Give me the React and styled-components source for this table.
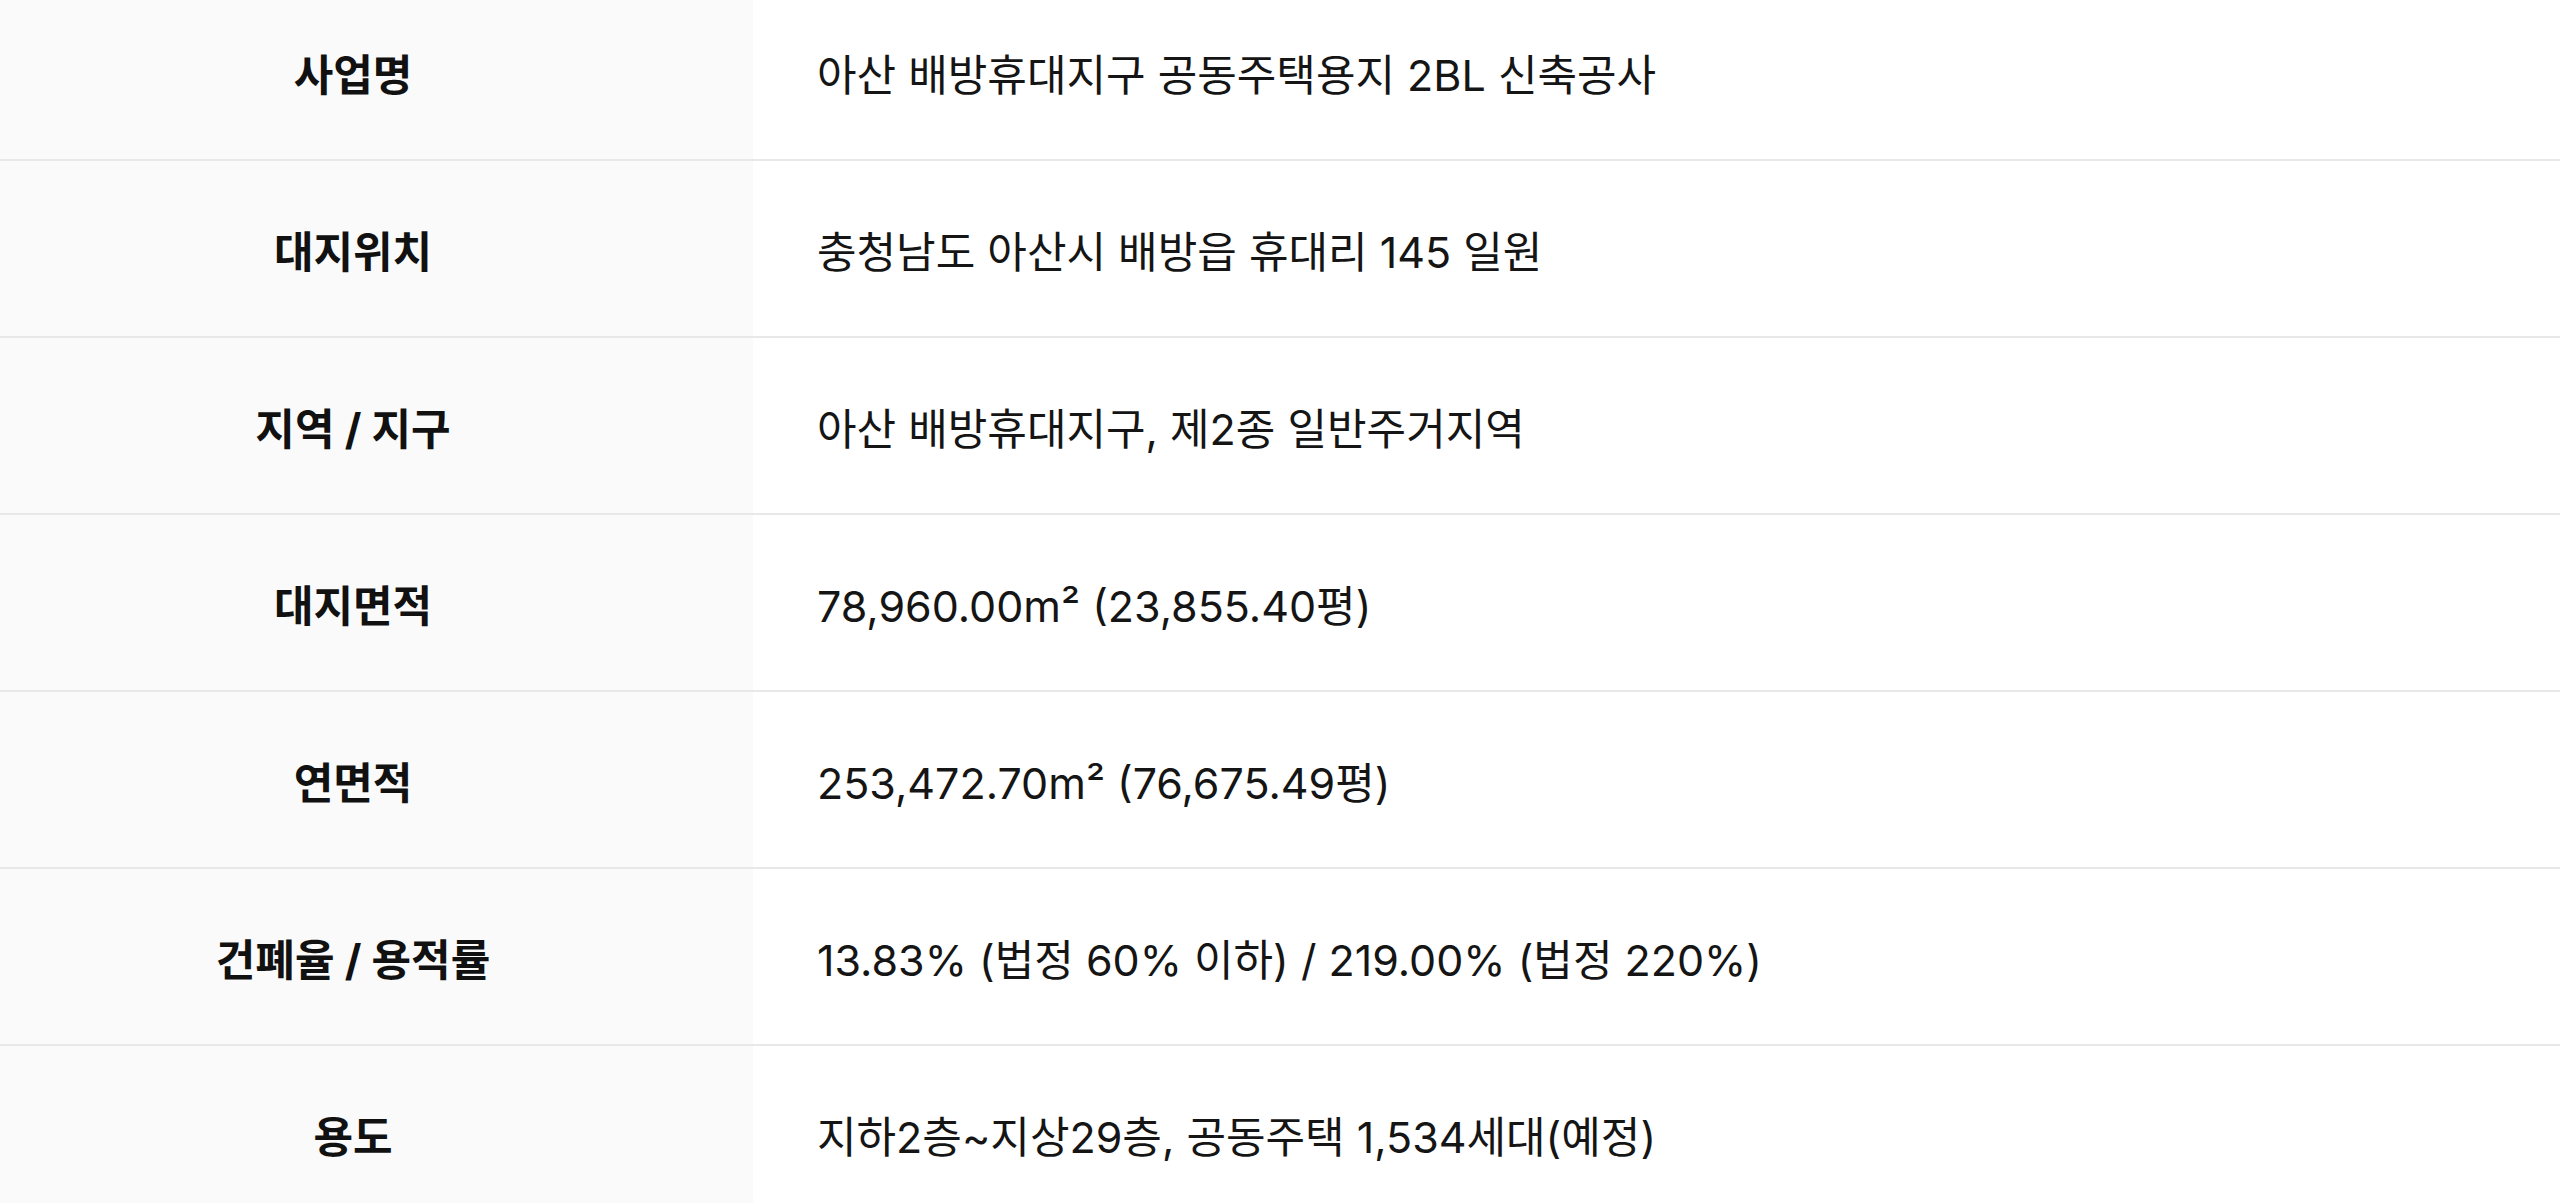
import React from 'react';
import styled, { createGlobalStyle } from 'styled-components';

const GlobalStyle = createGlobalStyle`
  html, body {
    margin: 0;
    padding: 0;
    background: #ffffff;
  }
  body {
    font-family: Inter, "Noto Sans CJK KR", sans-serif;
    color: #111111;
    overflow: hidden;
  }
`;

const InfoTable = styled.div`
  display: flex;
  flex-direction: column;
  margin-top: -16px;
`;

const Row = styled.div`
  display: grid;
  grid-template-columns: 753px 1fr;
  height: 177px;
  border-bottom: 2px solid #e8e8e8;
  box-sizing: border-box;
`;

const Label = styled.div`
  display: flex;
  align-items: center;
  justify-content: center;
  padding-right: 47px;
  background: #fafafa;
  font-size: 43px;
  font-weight: 700;
  color: #111111;
`;

const Value = styled.div`
  display: flex;
  align-items: center;
  padding-left: 64px;
  font-size: 43px;
  font-weight: 400;
  color: #151515;
`;

const rows = [
  { label: '사업명', value: '아산 배방휴대지구 공동주택용지 2BL 신축공사' },
  { label: '대지위치', value: '충청남도 아산시 배방읍 휴대리 145 일원' },
  { label: '지역 / 지구', value: '아산 배방휴대지구, 제2종 일반주거지역' },
  { label: '대지면적', value: '78,960.00m² (23,855.40평)' },
  { label: '연면적', value: '253,472.70m² (76,675.49평)' },
  { label: '건폐율 / 용적률', value: '13.83% (법정 60% 이하) / 219.00% (법정 220%)' },
  { label: '용도', value: '지하2층~지상29층, 공동주택 1,534세대(예정)' },
];

function App() {
  return (
    <>
      <GlobalStyle />
      <InfoTable>
        {rows.map((row) => (
          <Row key={row.label}>
            <Label>{row.label}</Label>
            <Value>{row.value}</Value>
          </Row>
        ))}
      </InfoTable>
    </>
  );
}

export default App;
